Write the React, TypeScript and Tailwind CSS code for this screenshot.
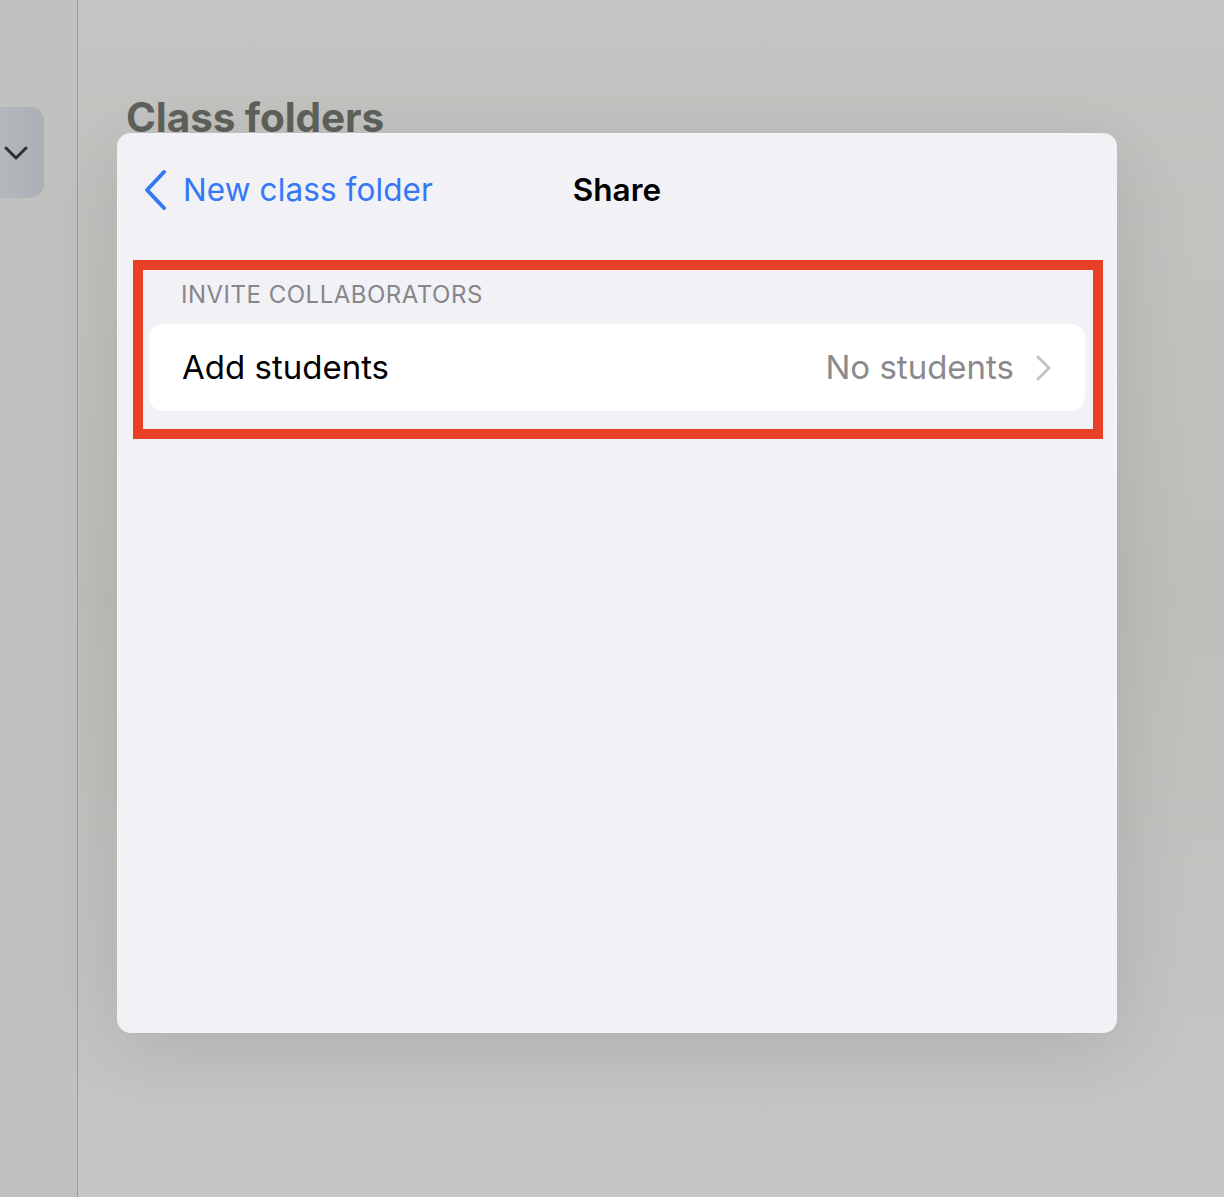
const font = { fontFamily: "Inter, 'Noto Sans', sans-serif" };

const App = () => {
  return (
    <div
      style={font}
      className="relative flex w-[1224px] h-[1197px] overflow-hidden bg-gradient-to-b from-[#c4c5c2] via-[#bebfbb] to-[#c6c6c5]"
    >
      {/* Sidebar */}
      <aside className="w-[78px] shrink-0 border-r border-[#9c9d9a] bg-[#c1c2bf] pt-[107px]">
        <div className="w-[44px] h-[91px] rounded-r-[14px] bg-gradient-to-r from-[#b4b8bb] to-[#a9b0b7] flex items-center">
          <svg width="26" height="16" viewBox="0 0 26 16" className="ml-[3px]" fill="none">
            <path d="M3 3l10 10L23 3" stroke="#2d3033" strokeWidth="3" strokeLinecap="round" strokeLinejoin="round" />
          </svg>
        </div>
      </aside>

      {/* Main */}
      <main className="flex-1 pl-[48px] pt-[98px]">
        <h1 className="text-[40.5px] font-bold tracking-[-0.1px] text-[#5f615b] leading-none">
          Class folders
        </h1>
      </main>

      {/* Modal sheet */}
      <div className="absolute left-[117px] top-[133px] w-[1000px] h-[900px] rounded-[14px] bg-[#f1f1f6] shadow-[0_16px_80px_rgba(0,0,0,0.11)]">
        <header className="relative flex items-center h-[114px] pl-[26px]">
          <button className="flex items-center gap-[14px] text-[#3478f6]">
            <svg width="26" height="42" viewBox="0 0 26 42" fill="none">
              <path d="M21 3L4 21l17 18" stroke="currentColor" strokeWidth="4" strokeLinecap="round" strokeLinejoin="round" />
            </svg>
            <span className="text-[31.5px] tracking-[0.1px]">New class folder</span>
          </button>
          <h2 className="absolute left-1/2 -translate-x-1/2 text-[31.5px] font-semibold text-black">
            Share
          </h2>
        </header>

        <section className="relative mt-[36px] px-[32px]">
          <p className="pl-[32px] text-[24px] text-[#86868b] tracking-[0.5px] leading-none">
            INVITE COLLABORATORS
          </p>
          <div className="mt-[17px] flex items-center h-[87px] rounded-[14px] bg-white pl-[33px] pr-[34px]">
            <span className="flex-1 text-[33px] text-black">Add students</span>
            <span className="text-[33px] text-[#8a8a8e]">No students</span>
            <svg width="16" height="26" viewBox="0 0 16 26" fill="none" className="ml-[21px]">
              <path d="M3 2l11 11L3 24" stroke="#c4c4c7" strokeWidth="3" strokeLinecap="round" strokeLinejoin="round" />
            </svg>
          </div>

          {/* annotation */}
          <div className="absolute left-[16px] top-[-23px] w-[970px] h-[179px] border-[10px] border-[#e83f27]" />
        </section>
      </div>
    </div>
  );
};

export default App;
